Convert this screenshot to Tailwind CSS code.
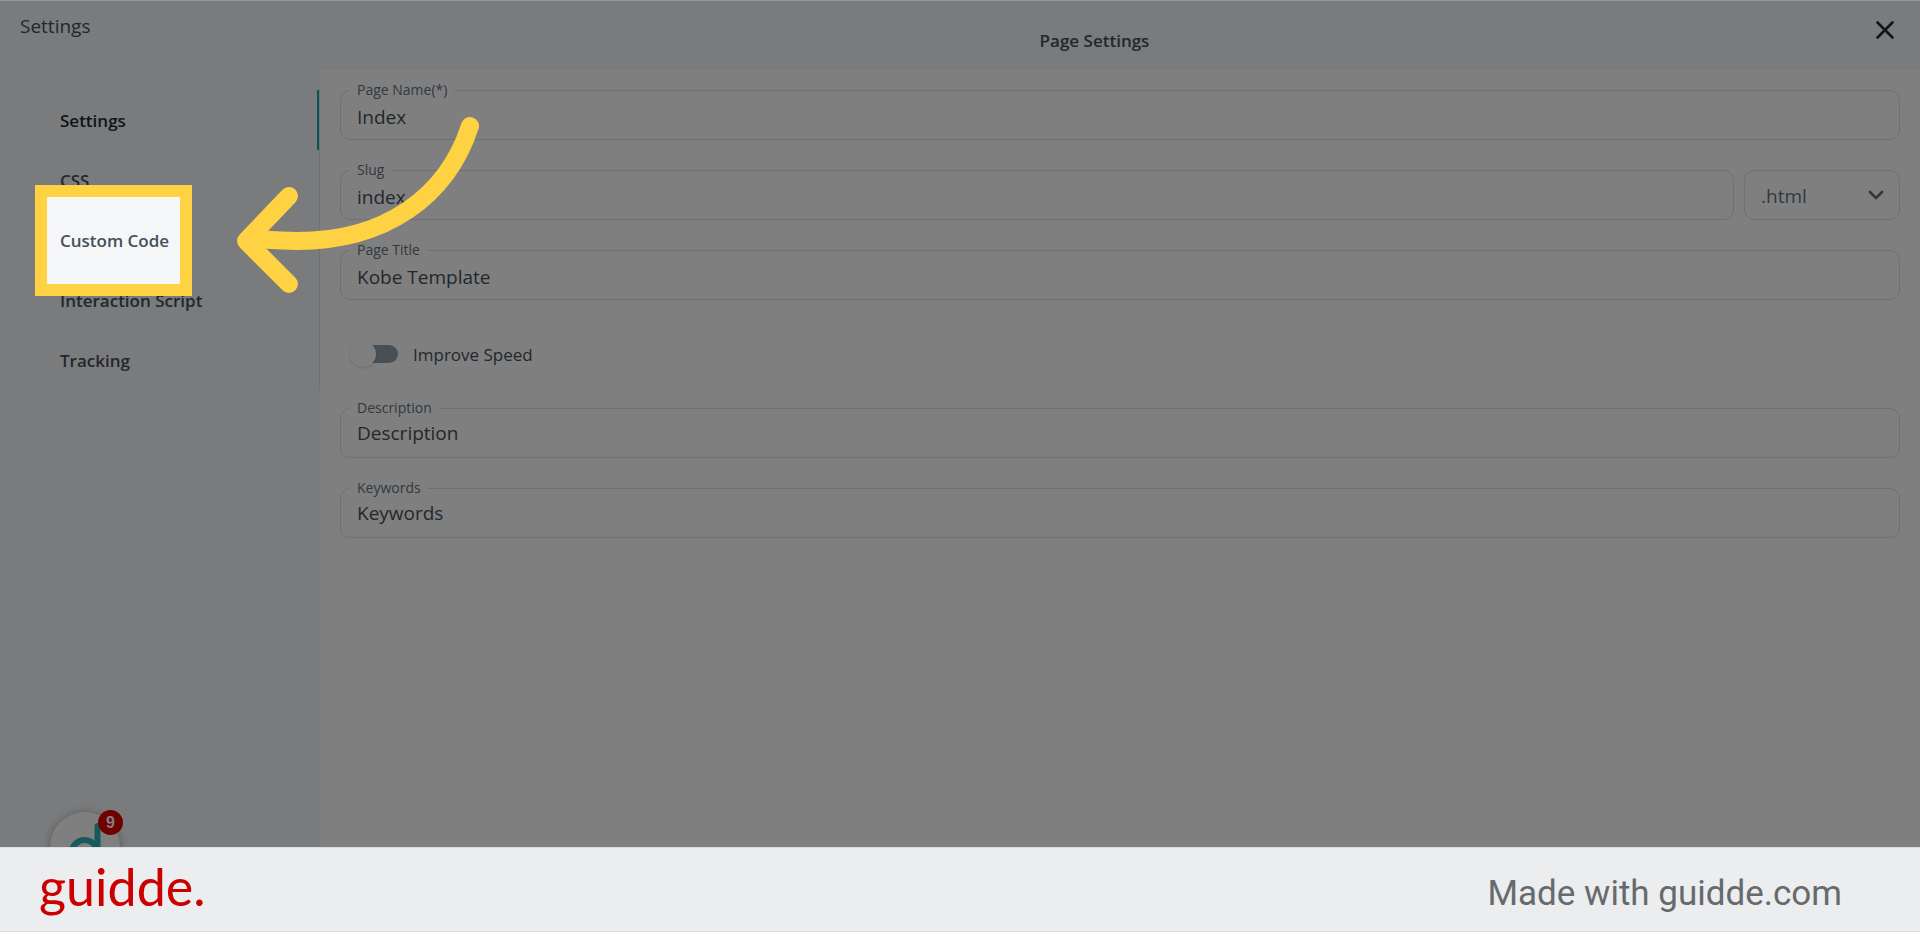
<!DOCTYPE html>
<html lang="en">
<head>
  <meta charset="UTF-8">
  <meta name="viewport" content="width=device-width, initial-scale=1.0">
  <title>Page Settings</title>
  <script src="https://cdn.jsdelivr.net/npm/@tailwindcss/browser@4"></script>
</head>
<body class="relative min-h-screen flex flex-col overflow-hidden bg-white text-[#454f5b] font-['Open_Sans',sans-serif]">

  <div class="relative z-20 h-px bg-[#999b9c]"></div>

  <!-- Header -->
  <header class="h-[69px] flex items-start bg-[#f4f6f8]">
    <h1 class="w-80 shrink-0 pl-5 pt-[11px] text-[19px] leading-7">Settings</h1>
    <h2 class="flex-1 pt-[26px] text-center text-[17px] leading-7 font-semibold">Page Settings</h2>
    <button type="button" aria-label="Close" class="size-8 mr-[19px] mt-[13px] flex items-center justify-center text-[#212b36]">
      <svg class="size-5" viewBox="0 0 20 20" fill="none" stroke="currentColor" stroke-width="2.6" stroke-linecap="round"><path d="M2.5 2.5l15 15M17.5 2.5l-15 15"/></svg>
    </button>
  </header>

  <div class="flex-1 flex">
    <!-- Sidebar -->
    <aside class="relative w-80 shrink-0 bg-[#f4f6f8] pt-5">
      <nav class="flex flex-col border-r border-[#dfe3e8] text-[17px] font-semibold">
        <a href="#" class="h-15 pl-15 pt-0.5 flex items-center text-[#212b36] border-r-2 border-[#14a8ad]">Settings</a>
        <a href="#" class="h-15 pl-15 pt-0.5 flex items-center">CSS</a>
        <a href="#" class="relative h-15 pl-15 pt-0.5 flex items-center">
          Custom Code
          <!-- Spotlight -->
          <span class="absolute z-10 left-[35px] -top-[25px] w-[157px] h-[111px] border-12 border-[#ffd243] shadow-[0_0_0_3000px_rgba(0,0,0,0.5)]"></span>
        </a>
        <a href="#" class="h-15 pl-15 pt-0.5 flex items-center">Interaction Script</a>
        <a href="#" class="h-15 pl-15 pt-0.5 flex items-center">Tracking</a>
      </nav>

      <!-- Chat widget -->
      <div class="absolute left-[50px] -bottom-[35px] size-[70px] rounded-full bg-white shadow-[0_1px_8px_rgba(0,0,0,0.3)]">
        <svg class="size-full" viewBox="0 0 70 70" fill="none" stroke="#2fb4bb" stroke-width="6" stroke-linecap="round"><circle cx="34.5" cy="41" r="13"/><path d="M47.5 14v42"/></svg>
        <span class="absolute left-12 -top-0.5 size-[25px] rounded-full bg-[#e00000] text-white text-base font-bold flex items-center justify-center font-['Liberation_Sans',sans-serif]">9</span>
      </div>
    </aside>

    <!-- Form -->
    <main class="flex-1 px-5 pt-5">
      <form class="flex flex-col gap-[30px] text-[19px]">
        <div class="relative">
          <label for="name" class="absolute left-2.5 -top-2.5 px-[7px] bg-white text-sm text-[#637381]">Page Name(*)</label>
          <input id="name" type="text" value="Index" class="block w-full h-[50px] px-4 pt-1 rounded-[10px] border border-[#dce0e4]">
        </div>

        <div class="flex gap-2.5">
          <div class="relative flex-1">
            <label for="slug" class="absolute left-2.5 -top-2.5 px-[7px] bg-white text-sm text-[#637381]">Slug</label>
            <input id="slug" type="text" value="index" class="block w-full h-[50px] px-4 pt-1 rounded-[10px] border border-[#dce0e4]">
          </div>
          <div class="relative w-39">
            <select aria-label="Extension" class="block w-full h-[50px] px-4 pt-0.5 appearance-none rounded-[10px] border border-[#dce0e4] text-[#637381]">
              <option>.html</option>
            </select>
            <svg class="absolute right-4 top-[17px] size-4 text-[#637381]" viewBox="0 0 16 16" fill="none" stroke="currentColor" stroke-width="2.6" stroke-linecap="round" stroke-linejoin="round"><path d="M2 5l6 6 6-6"/></svg>
          </div>
        </div>

        <div class="relative">
          <label for="title" class="absolute left-2.5 -top-2.5 px-[7px] bg-white text-sm text-[#637381]">Page Title</label>
          <input id="title" type="text" value="Kobe Template" class="block w-full h-[50px] px-4 pt-1 rounded-[10px] border border-[#dce0e4]">
        </div>

        <div class="h-12 pl-4 flex items-center gap-[15px]">
          <input id="speed" type="checkbox" class="relative appearance-none w-[42px] h-[18px] rounded-full bg-[#919eab] before:absolute before:-left-1.5 before:-top-1 before:size-[26px] before:rounded-full before:bg-white before:shadow-[0_1px_3px_rgba(0,0,0,0.15)]">
          <label for="speed" class="pt-0.5 text-[17px]">Improve Speed</label>
        </div>

        <div class="relative">
          <label for="description" class="absolute left-2.5 -top-2.5 px-[7px] bg-white text-sm text-[#637381]">Description</label>
          <input id="description" type="text" value="Description" class="block w-full h-[50px] px-4 rounded-[10px] border border-[#dce0e4]">
        </div>

        <div class="relative">
          <label for="keywords" class="absolute left-2.5 -top-2.5 px-[7px] bg-white text-sm text-[#637381]">Keywords</label>
          <input id="keywords" type="text" value="Keywords" class="block w-full h-[50px] px-4 rounded-[10px] border border-[#dce0e4]">
        </div>
      </form>
    </main>
  </div>

  <!-- Arrow -->
  <svg class="absolute z-20 left-[230px] top-[110px] w-[260px] h-[190px]" viewBox="230 110 260 190" fill="none" stroke="#ffd243" stroke-width="18" stroke-linecap="round" stroke-linejoin="round">
    <path d="M470 126C447 197 385 241 297 241C282 241 270 240 256 239"/>
    <path d="M289 196L246 241L289 284"/>
  </svg>

  <footer class="relative z-20 h-[85px] pl-[39px] pr-[78px] flex items-center justify-between bg-[#ebedef] border-y border-[#dfdfdf]">
    <div class="pb-2 text-[52px] leading-none text-[#cc0000] font-[Lato,sans-serif]">guidde.</div>
    <p class="pt-2 text-[35px] leading-none text-[#666a6d] font-[Roboto,sans-serif]">Made with guidde.com</p>
  </footer>
</body>
</html>
